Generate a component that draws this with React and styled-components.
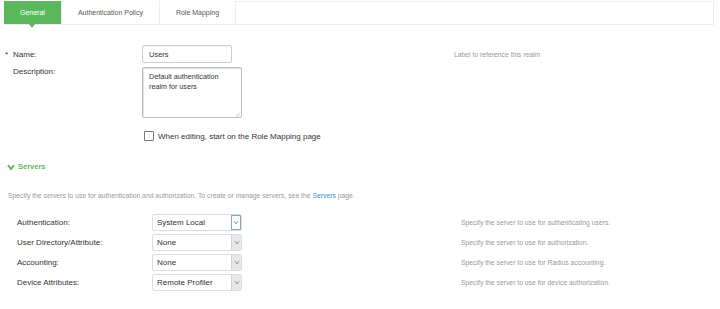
import React from 'react'
import styled, { createGlobalStyle } from 'styled-components'

const Global = createGlobalStyle`
  html, body {
    margin: 0;
    padding: 0;
    background: #fff;
  }
  body {
    font-family: "Liberation Sans", Arial, sans-serif;
    color: #333;
  }
`

const tabs = ['General', 'Authentication Policy', 'Role Mapping']

const servers = [
  { label: 'Authentication:', value: 'System Local', help: 'Specify the server to use for authenticating users.', focus: true },
  { label: 'User Directory/Attribute:', value: 'None', help: 'Specify the server to use for authorization.' },
  { label: 'Accounting:', value: 'None', help: 'Specify the server to use for Radius accounting.' },
  { label: 'Device Attributes:', value: 'Remote Profiler', help: 'Specify the server to use for device authorization.' },
]

const Chevron = ({ color = '#999', w = 4, h = 3, sw = 1 }) => (
  <svg width={w + 2} height={h + 2} viewBox={`0 0 ${w + 2} ${h + 2}`}>
    <polyline points={`1,1 ${w / 2 + 1},${h + 1} ${w + 1},1`} fill="none" stroke={color} strokeWidth={sw} />
  </svg>
)

export default function App() {
  return (
    <Page>
      <Global />
      <TabBar>
        {tabs.map((t, i) => (
          <Tab key={t} active={i === 0}>{t}</Tab>
        ))}
      </TabBar>

      <Realm>
        <Row>
          <Req>*</Req>
          <Label>Name:</Label>
          <Input>Users</Input>
          <Help>Label to reference this realm</Help>
        </Row>
        <Row top>
          <Req />
          <Label>Description:</Label>
          <TextArea>
            Default authentication<br />realm for users
            <Grip>
              <svg width="5" height="5" viewBox="0 0 5 5">
                <path d="M1 4.5 L4.5 1 M3 4.5 L4.5 3" stroke="#aaa" strokeWidth="0.7" />
              </svg>
            </Grip>
          </TextArea>
        </Row>
        <CheckRow>
          <Box />
          <span>When editing, start on the Role Mapping page</span>
        </CheckRow>
      </Realm>

      <SectionHead>
        <Chevron color="#5cb85c" w={6} h={4} sw={2} />
        <span>Servers</span>
      </SectionHead>
      <Intro>
        Specify the servers to use for authentication and authorization. To create or manage servers, see the <Link>Servers</Link> page.
      </Intro>

      <ServerList>
        {servers.map(s => (
          <ServerRow key={s.label}>
            <Label>{s.label}</Label>
            <Select>
              <SelectValue>{s.value}</SelectValue>
              <Arrow focus={s.focus}>
                <Chevron />
              </Arrow>
            </Select>
            <Help>{s.help}</Help>
          </ServerRow>
        ))}
      </ServerList>
    </Page>
  )
}

const Page = styled.div`
  width: 720px;
  height: 309px;
  overflow: hidden;
`

const TabBar = styled.div`
  display: flex;
  height: 22px;
  margin: 1px 6px 0 4px;
  border-top: 1px solid #f0f0f0;
  border-right: 1px solid #ececec;
  border-bottom: 1px solid #ececec;
`

const Tab = styled.div`
  position: relative;
  display: flex;
  align-items: center;
  padding: 0 16px;
  margin-top: -1px;
  font-size: 7px;
  color: ${p => (p.active ? '#fff' : '#555')};
  background: ${p => (p.active ? '#5cb85c' : '#fff')};
  border-right: 1px solid #ececec;
  ${p => p.active && `
    &::after {
      content: '';
      position: absolute;
      left: 50%;
      bottom: -4px;
      margin-left: -3px;
      border-left: 3px solid transparent;
      border-right: 3px solid transparent;
      border-top: 4px solid #5cb85c;
    }
  `}
`

const Realm = styled.div`
  margin-top: 20px;
  padding-left: 5px;
`

const Row = styled.div`
  display: grid;
  grid-template-columns: 8px 129px 312px auto;
  align-items: ${p => (p.top ? 'start' : 'center')};
  margin-bottom: 4px;
  font-size: 8px;
`

const Req = styled.span`
  font-size: 8px;
  color: #333;
`

const Label = styled.span`
  font-size: 8px;
  color: #333;
  ${Row}[top] & {
    padding-top: 2px;
  }
`

const Input = styled.div`
  box-sizing: border-box;
  width: 90px;
  height: 18px;
  padding: 0 6px;
  display: flex;
  align-items: center;
  font-size: 7.5px;
  border: 1px solid #ccc;
  border-radius: 2px;
  box-shadow: inset 0 1px 1px rgba(0, 0, 0, 0.06);
`

const TextArea = styled.div`
  position: relative;
  box-sizing: border-box;
  width: 100px;
  height: 51px;
  padding: 4px 6px;
  font-size: 7.2px;
  line-height: 10px;
  border: 1px solid #bbb;
  border-radius: 2px;
  box-shadow: inset 1px 1px 1px rgba(0, 0, 0, 0.12);
`

const Grip = styled.span`
  position: absolute;
  right: 1px;
  bottom: 0;
  line-height: 0;
`

const Help = styled.span`
  font-size: 6.8px;
  color: #999;
`

const CheckRow = styled.label`
  display: flex;
  align-items: center;
  gap: 4px;
  margin: 13px 0 0 139px;
  font-size: 8px;
  color: #333;
`

const Box = styled.span`
  box-sizing: border-box;
  width: 10px;
  height: 10px;
  border: 1px solid #777;
  border-radius: 1px;
  background: #fff;
`

const SectionHead = styled.div`
  display: flex;
  align-items: center;
  gap: 3px;
  margin: 21px 0 0 7px;
  font-size: 7.5px;
  font-weight: bold;
  color: #5cb85c;
`

const Intro = styled.p`
  margin: 21px 0 0 8px;
  font-size: 6.8px;
  color: #999;
`

const Link = styled.span`
  color: #3a8fd6;
`

const ServerList = styled.div`
  margin-top: 15px;
  padding-left: 17px;
  display: flex;
  flex-direction: column;
  gap: 3px;
`

const ServerRow = styled.div`
  display: grid;
  grid-template-columns: 135px 309px auto;
  align-items: center;
`

const Select = styled.div`
  box-sizing: border-box;
  display: flex;
  width: 90px;
  height: 17px;
  border: 1px solid #ddd;
  border-radius: 2px;
  overflow: hidden;
`

const SelectValue = styled.span`
  flex: 1;
  display: flex;
  align-items: center;
  padding-left: 4px;
  font-size: 8px;
  color: #333;
`

const Arrow = styled.span`
  box-sizing: border-box;
  width: 10px;
  display: flex;
  align-items: center;
  justify-content: center;
  background: ${p => (p.focus ? '#fff' : '#e8e8e8')};
  border: ${p => (p.focus ? '1px solid #7aa9d6' : 'none')};
  border-left: 1px solid ${p => (p.focus ? '#7aa9d6' : '#d4d4d4')};
`
